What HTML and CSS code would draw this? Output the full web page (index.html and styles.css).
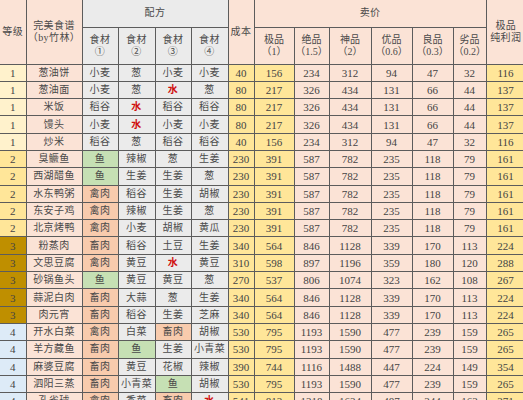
FILE: index.html
```html
<!DOCTYPE html>
<html lang="zh">
<head>
<meta charset="utf-8">
<link rel="stylesheet" href="styles.css">
</head>
<body>
<table class="sheet">
  <colgroup>
    <col class="c-lv"><col class="c-name"><col class="c-i1"><col class="c-i2"><col class="c-i3"><col class="c-i4"><col class="c-cost">
    <col class="c-p1"><col class="c-p2"><col class="c-p3"><col class="c-p4"><col class="c-p5"><col class="c-p6"><col class="c-net">
  </colgroup>
  <thead>
    <tr class="h1">
      <th rowspan="2" class="hp">等级</th>
      <th rowspan="2" class="hp">完美食谱<br>（by竹林）</th>
      <th colspan="4" class="hg">配方</th>
      <th rowspan="2" class="hp">成本</th>
      <th colspan="6" class="hp">卖价</th>
      <th rowspan="2" class="hp">极品<br>纯利润</th>
    </tr>
    <tr class="h2">
      <th class="hg">食材<br>①</th>
      <th class="hg">食材<br>②</th>
      <th class="hg">食材<br>③</th>
      <th class="hg">食材<br>④</th>
      <th class="hp">极品<br>（1）</th>
      <th class="hp">绝品<br>（1.5）</th>
      <th class="hp">神品<br>（2）</th>
      <th class="hp">优品<br>（0.6）</th>
      <th class="hp">良品<br>（0.3）</th>
      <th class="hp">劣品<br>（0.2）</th>
    </tr>
  </thead>
  <tbody>
    <tr><td class="l1">1</td><td class="nm">葱油饼</td><td class="ig">小麦</td><td class="ig">葱</td><td class="ig">小麦</td><td class="ig">小麦</td><td class="yl">40</td><td class="yl">156</td><td class="pk">234</td><td class="pk">312</td><td class="pk">94</td><td class="pk">47</td><td class="pk">32</td><td class="yl">116</td></tr>
    <tr><td class="l1">1</td><td class="nm">葱油面</td><td class="ig">小麦</td><td class="ig">葱</td><td class="ig water">水</td><td class="ig">葱</td><td class="yl">80</td><td class="yl">217</td><td class="pk">326</td><td class="pk">434</td><td class="pk">131</td><td class="pk">66</td><td class="pk">44</td><td class="yl">137</td></tr>
    <tr><td class="l1">1</td><td class="nm">米饭</td><td class="ig">稻谷</td><td class="ig water">水</td><td class="ig">稻谷</td><td class="ig">稻谷</td><td class="yl">80</td><td class="yl">217</td><td class="pk">326</td><td class="pk">434</td><td class="pk">131</td><td class="pk">66</td><td class="pk">44</td><td class="yl">137</td></tr>
    <tr><td class="l1">1</td><td class="nm">馒头</td><td class="ig">小麦</td><td class="ig water">水</td><td class="ig">小麦</td><td class="ig">小麦</td><td class="yl">80</td><td class="yl">217</td><td class="pk">326</td><td class="pk">434</td><td class="pk">131</td><td class="pk">66</td><td class="pk">44</td><td class="yl">137</td></tr>
    <tr><td class="l1">1</td><td class="nm">炒米</td><td class="ig">稻谷</td><td class="ig">葱</td><td class="ig">稻谷</td><td class="ig">稻谷</td><td class="yl">40</td><td class="yl">156</td><td class="pk">234</td><td class="pk">312</td><td class="pk">94</td><td class="pk">47</td><td class="pk">32</td><td class="yl">116</td></tr>
    <tr><td class="l2">2</td><td class="nm">臭鳜鱼</td><td class="fish">鱼</td><td class="ig">辣椒</td><td class="ig">葱</td><td class="ig">生姜</td><td class="yl">230</td><td class="yl">391</td><td class="pk">587</td><td class="pk">782</td><td class="pk">235</td><td class="pk">118</td><td class="pk">79</td><td class="yl">161</td></tr>
    <tr><td class="l2">2</td><td class="nm">西湖醋鱼</td><td class="fish">鱼</td><td class="ig">生姜</td><td class="ig">生姜</td><td class="ig">葱</td><td class="yl">230</td><td class="yl">391</td><td class="pk">587</td><td class="pk">782</td><td class="pk">235</td><td class="pk">118</td><td class="pk">79</td><td class="yl">161</td></tr>
    <tr><td class="l2">2</td><td class="nm">水东鸭粥</td><td class="meat">禽肉</td><td class="ig">稻谷</td><td class="ig">生姜</td><td class="ig">胡椒</td><td class="yl">230</td><td class="yl">391</td><td class="pk">587</td><td class="pk">782</td><td class="pk">235</td><td class="pk">118</td><td class="pk">79</td><td class="yl">161</td></tr>
    <tr><td class="l2">2</td><td class="nm">东安子鸡</td><td class="meat">禽肉</td><td class="ig">辣椒</td><td class="ig">生姜</td><td class="ig">葱</td><td class="yl">230</td><td class="yl">391</td><td class="pk">587</td><td class="pk">782</td><td class="pk">235</td><td class="pk">118</td><td class="pk">79</td><td class="yl">161</td></tr>
    <tr><td class="l2">2</td><td class="nm">北京烤鸭</td><td class="meat">禽肉</td><td class="ig">小麦</td><td class="ig">胡椒</td><td class="ig">黄瓜</td><td class="yl">230</td><td class="yl">391</td><td class="pk">587</td><td class="pk">782</td><td class="pk">235</td><td class="pk">118</td><td class="pk">79</td><td class="yl">161</td></tr>
    <tr><td class="l3">3</td><td class="nm">粉蒸肉</td><td class="meat">畜肉</td><td class="ig">稻谷</td><td class="ig">土豆</td><td class="ig">生姜</td><td class="yl">340</td><td class="yl">564</td><td class="pk">846</td><td class="pk">1128</td><td class="pk">339</td><td class="pk">170</td><td class="pk">113</td><td class="yl">224</td></tr>
    <tr><td class="l3">3</td><td class="nm">文思豆腐</td><td class="meat">禽肉</td><td class="ig">黄豆</td><td class="ig water">水</td><td class="ig">黄豆</td><td class="yl">310</td><td class="yl">598</td><td class="pk">897</td><td class="pk">1196</td><td class="pk">359</td><td class="pk">180</td><td class="pk">120</td><td class="yl">288</td></tr>
    <tr><td class="l3">3</td><td class="nm">砂锅鱼头</td><td class="fish">鱼</td><td class="ig">黄豆</td><td class="ig">黄豆</td><td class="ig">葱</td><td class="yl">270</td><td class="yl">537</td><td class="pk">806</td><td class="pk">1074</td><td class="pk">323</td><td class="pk">162</td><td class="pk">108</td><td class="yl">267</td></tr>
    <tr><td class="l3">3</td><td class="nm">蒜泥白肉</td><td class="meat">畜肉</td><td class="ig">大蒜</td><td class="ig">葱</td><td class="ig">生姜</td><td class="yl">340</td><td class="yl">564</td><td class="pk">846</td><td class="pk">1128</td><td class="pk">339</td><td class="pk">170</td><td class="pk">113</td><td class="yl">224</td></tr>
    <tr><td class="l3">3</td><td class="nm">肉元宵</td><td class="meat">畜肉</td><td class="ig">稻谷</td><td class="ig">生姜</td><td class="ig">芝麻</td><td class="yl">340</td><td class="yl">564</td><td class="pk">846</td><td class="pk">1128</td><td class="pk">339</td><td class="pk">170</td><td class="pk">113</td><td class="yl">224</td></tr>
    <tr><td class="l4">4</td><td class="nm">开水白菜</td><td class="meat">禽肉</td><td class="ig">白菜</td><td class="meat">畜肉</td><td class="ig">胡椒</td><td class="yl">530</td><td class="yl">795</td><td class="pk">1193</td><td class="pk">1590</td><td class="pk">477</td><td class="pk">239</td><td class="pk">159</td><td class="yl">265</td></tr>
    <tr><td class="l4">4</td><td class="nm">羊方藏鱼</td><td class="meat">畜肉</td><td class="fish">鱼</td><td class="ig">生姜</td><td class="ig">小青菜</td><td class="yl">530</td><td class="yl">795</td><td class="pk">1193</td><td class="pk">1590</td><td class="pk">477</td><td class="pk">239</td><td class="pk">159</td><td class="yl">265</td></tr>
    <tr><td class="l4">4</td><td class="nm">麻婆豆腐</td><td class="meat">畜肉</td><td class="ig">黄豆</td><td class="ig">花椒</td><td class="ig">辣椒</td><td class="yl">390</td><td class="yl">744</td><td class="pk">1116</td><td class="pk">1488</td><td class="pk">447</td><td class="pk">224</td><td class="pk">149</td><td class="yl">354</td></tr>
    <tr><td class="l4">4</td><td class="nm">泗阳三蒸</td><td class="meat">畜肉</td><td class="ig">小青菜</td><td class="fish">鱼</td><td class="ig">胡椒</td><td class="yl">530</td><td class="yl">795</td><td class="pk">1193</td><td class="pk">1590</td><td class="pk">477</td><td class="pk">239</td><td class="pk">159</td><td class="yl">265</td></tr>
    <tr><td class="l4">4</td><td class="nm">孔雀球</td><td class="meat">禽肉</td><td class="ig">香菜</td><td class="meat">畜肉</td><td class="ig water">水</td><td class="yl">541</td><td class="yl">812</td><td class="pk">1218</td><td class="pk">1624</td><td class="pk">487</td><td class="pk">244</td><td class="pk">162</td><td class="yl">271</td></tr>
  </tbody>
</table>
</body>
</html>
```
FILE: styles.css
```css
html, body {
  margin: 0;
  padding: 0;
  background: #ffffff;
  overflow: hidden;
}

.sheet {
  border-collapse: collapse;
  table-layout: fixed;
  width: 524px;
  font-family: "Liberation Serif", "Noto Sans CJK SC", serif;
  font-size: 11px;
  color: #444444;
}

.c-lv { width: 26px; }
.c-name { width: 56px; }
.c-i1 { width: 36px; }
.c-i2 { width: 37px; }
.c-i3 { width: 36px; }
.c-i4 { width: 37px; }
.c-cost { width: 26px; }
.c-p1 { width: 40px; }
.c-p2 { width: 35px; }
.c-p3 { width: 42px; }
.c-p4 { width: 41px; }
.c-p5 { width: 41px; }
.c-p6 { width: 33px; }
.c-net { width: 39px; }

.sheet th,
.sheet td {
  border: 1px solid #5c5c5c;
  padding: 0;
  text-align: center;
  vertical-align: middle;
  white-space: nowrap;
  overflow: hidden;
  font-weight: normal;
  line-height: 12px;
}

.sheet th,
.nm, .ig, .fish, .meat {
  font-size: 10px;
  letter-spacing: 0.4px;
  color: #4a4a4a;
}

.h2 > .hp { letter-spacing: 0; }

.sheet tr > :first-child { border-left: 0; }
.h1 > th { border-top: 0; }
.h1 > th:last-child { border-right: 0; }

.h1 { height: 27px; }
.h2 { height: 37px; }
.sheet tbody tr { height: 17.3px; }

.hp { background: #fbe3d6; }
.hg { background: #ebebeb; }

.l1 { background: #fff2cc; }
.l2 { background: #ffe699; }
.l3 { background: #bf8f00; }
.l4 { background: #ddebf7; }

.nm { background: #fbe3d6; }
.ig { background: #ebebeb; }
.fish { background: #c6e0b4; }
.meat { background: #f8cbad; }
.sheet .water { color: #d01010; font-weight: bold; }

.yl { background: #ffe699; }
.pk { background: #fbe3d6; }
```
